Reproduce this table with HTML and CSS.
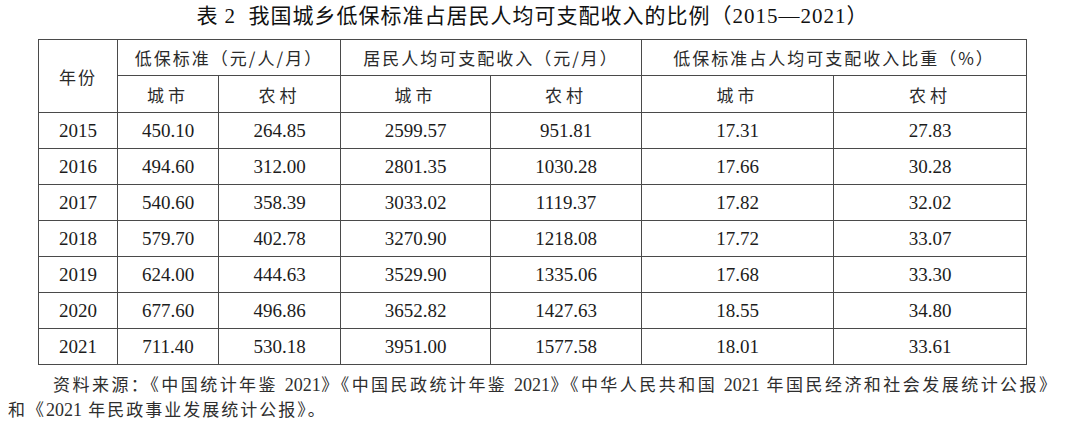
FILE: index.html
```html
<!DOCTYPE html>
<html lang="zh-CN">
<head>
    <meta charset="UTF-8">
    <meta name="viewport" content="width=device-width, initial-scale=1.0">
    <title>表 2 我国城乡低保标准占居民人均可支配收入的比例</title>
    <link rel="stylesheet" href="styles.css">
</head>
<body>
    <div class="sheet">
        <h1 class="caption">表 2&nbsp; 我国城乡低保标准占居民人均可支配收入的比例（2015—2021）</h1>

        <table class="data">
            <colgroup>
                <col class="c-year">
                <col class="c1">
                <col class="c2">
                <col class="c3">
                <col class="c4">
                <col class="c5">
                <col class="c6">
            </colgroup>
            <thead>
                <tr>
                    <th rowspan="2" class="year-head">年份</th>
                    <th colspan="2">低保标准（元/人/月）</th>
                    <th colspan="2">居民人均可支配收入（元/月）</th>
                    <th colspan="2">低保标准占人均可支配收入比重（%）</th>
                </tr>
                <tr class="sub">
                    <th>城市</th>
                    <th>农村</th>
                    <th>城市</th>
                    <th>农村</th>
                    <th>城市</th>
                    <th>农村</th>
                </tr>
            </thead>
            <tbody>
                <tr><td>2015</td><td>450.10</td><td>264.85</td><td>2599.57</td><td>951.81</td><td>17.31</td><td>27.83</td></tr>
                <tr><td>2016</td><td>494.60</td><td>312.00</td><td>2801.35</td><td>1030.28</td><td>17.66</td><td>30.28</td></tr>
                <tr><td>2017</td><td>540.60</td><td>358.39</td><td>3033.02</td><td>1119.37</td><td>17.82</td><td>32.02</td></tr>
                <tr><td>2018</td><td>579.70</td><td>402.78</td><td>3270.90</td><td>1218.08</td><td>17.72</td><td>33.07</td></tr>
                <tr><td>2019</td><td>624.00</td><td>444.63</td><td>3529.90</td><td>1335.06</td><td>17.68</td><td>33.30</td></tr>
                <tr><td>2020</td><td>677.60</td><td>496.86</td><td>3652.82</td><td>1427.63</td><td>18.55</td><td>34.80</td></tr>
                <tr><td>2021</td><td>711.40</td><td>530.18</td><td>3951.00</td><td>1577.58</td><td>18.01</td><td>33.61</td></tr>
            </tbody>
        </table>
    </div>

    <div class="source">
        <p class="line first">资料来源：《中国统计年鉴 <span class="num">2021</span>》《中国民政统计年鉴 <span class="num">2021</span>》《中华人民共和国 <span class="num">2021</span> 年国民经济和社会发展统计公报》</p>
        <p class="line">和《<span class="num">2021</span> 年民政事业发展统计公报》。</p>
    </div>
</body>
</html>
```

FILE: styles.css
```css
body {
    margin: 0;
    padding: 0;
    background: #fff;
    color: #1c1c1c;
    font-family: "Liberation Serif", "Noto Sans CJK SC", serif;
}

.sheet {
    width: 989px;
    margin-left: 38px;
}

.caption {
    margin: 0;
    height: 32px;
    line-height: 32px;
    text-align: center;
    font-size: 21px;
    font-weight: 400;
    letter-spacing: 1px;
    color: #111;
}

.data {
    margin-top: 7px;
    width: 989px;
    border-collapse: collapse;
    table-layout: fixed;
    border: 1px solid #222;
}

.c-year { width: 79px; }
.c1 { width: 101px; }
.c2 { width: 122px; }
.c3 { width: 150px; }
.c4 { width: 151px; }
.c5 { width: 192px; }
.c6 { width: 193px; }

.data th,
.data td {
    border: 1px solid #4a4a4a;
    padding: 0;
    height: 35px;
    text-align: center;
    vertical-align: middle;
}

.data th {
    font-family: "Noto Sans CJK SC", sans-serif;
    font-weight: 400;
    font-size: 17px;
    letter-spacing: 2px;
    color: #2a2a2a;
}

.data .sub th {
    letter-spacing: 4px;
    height: 36px;
}

.data td {
    font-size: 19px;
    color: #1c1c1c;
}

.source {
    margin: 8px 22px 0 8px;
    font-size: 17px;
    letter-spacing: 2px;
    color: #2e2e2e;
}

.source .num {
    font-size: 18px;
    letter-spacing: 0;
}

.line {
    margin: 0;
    line-height: 25px;
}

.first {
    padding-left: 45px;
    text-align: justify;
    text-align-last: justify;
}
```
